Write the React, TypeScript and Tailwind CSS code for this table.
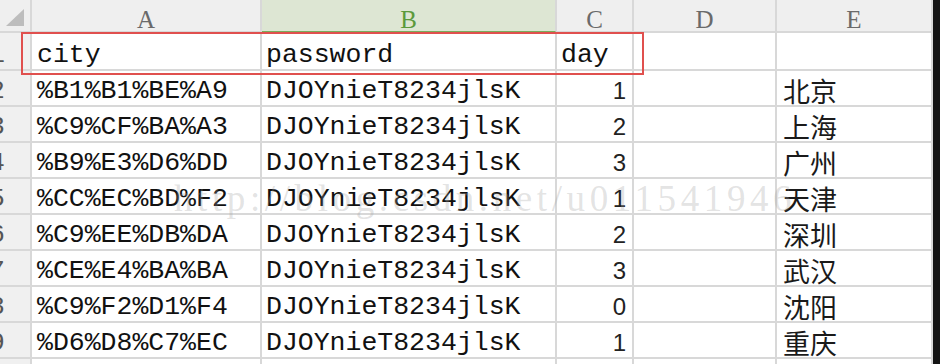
import React from "react";

type Row = { n: number; code: string; day: number; city: string };

const rows: Row[] = [
  { n: 2, code: "%B1%B1%BE%A9", day: 1, city: "北京" },
  { n: 3, code: "%C9%CF%BA%A3", day: 2, city: "上海" },
  { n: 4, code: "%B9%E3%D6%DD", day: 3, city: "广州" },
  { n: 5, code: "%CC%EC%BD%F2", day: 1, city: "天津" },
  { n: 6, code: "%C9%EE%DB%DA", day: 2, city: "深圳" },
  { n: 7, code: "%CE%E4%BA%BA", day: 3, city: "武汉" },
  { n: 8, code: "%C9%F2%D1%F4", day: 0, city: "沈阳" },
  { n: 9, code: "%D6%D8%C7%EC", day: 1, city: "重庆" },
];

const PASSWORD = "DJOYnieT8234jlsK";

const mono = "font-['Liberation_Mono',monospace] text-[26.5px] leading-none";
const cell = "shrink-0 border-r-2 border-b-2 border-[#d8d8d8] flex items-end overflow-hidden";

const headers = [
  { l: "A", w: "w-[230px]" },
  { l: "B", w: "w-[295px]" },
  { l: "C", w: "w-[77px]" },
  { l: "D", w: "w-[143px]" },
  { l: "E", w: "w-[156px]" },
];

function RowNum({ n, h }: { n?: number; h: string }) {
  return (
    <div className={`${cell} ${h} w-[32px] bg-[#f0f0f0] justify-end pr-[25px] pb-[1px]`}>
      <span className={`${mono} text-[#555]`}>{n}</span>
    </div>
  );
}

export default function App() {
  return (
    <div className="relative w-[940px] h-[364px] overflow-hidden bg-white flex">
      <div className="w-[933px] shrink-0 flex flex-col">
        {/* column headers */}
        <div className="flex h-[33px] shrink-0 bg-[#efefef]">
          <div className="relative w-[32px] shrink-0 border-r-2 border-b-2 border-[#d8d8d8]">
            <svg width="20" height="20" viewBox="0 0 20 20" className="absolute left-[5px] top-[8px]">
              <polygon points="1,18 19,18 19,1" fill="#bdbdbd" />
            </svg>
          </div>
          {headers.map((c) =>
            c.l === "B" ? (
              <div
                key={c.l}
                className={`${c.w} shrink-0 border-r-2 border-b-2 border-r-[#d8d8d8] border-b-[#79ad5c] bg-[#dde6d3] flex items-end justify-center`}
              >
                <span className="font-['Liberation_Serif',serif] text-[25px] leading-none text-[#5c9a3c] translate-y-[1px]">{c.l}</span>
              </div>
            ) : (
              <div
                key={c.l}
                className={`${c.w} shrink-0 border-r-2 border-b-2 border-[#d8d8d8] flex items-end justify-center`}
              >
                <span className="font-['Liberation_Serif',serif] text-[25px] leading-none text-[#6a6a6a] translate-y-[1px]">{c.l}</span>
              </div>
            )
          )}
        </div>

        {/* row 1: field names */}
        <div className="flex h-[38px] shrink-0">
          <RowNum n={1} h="h-[38px]" />
          <div className={`${cell} h-[38px] w-[230px] pl-[5px] pb-[1px]`}>
            <span className={`${mono} text-[#111]`}>city</span>
          </div>
          <div className={`${cell} h-[38px] w-[295px] pl-[4px] pb-[1px]`}>
            <span className={`${mono} text-[#111]`}>password</span>
          </div>
          <div className={`${cell} h-[38px] w-[77px] pl-[4px] pb-[1px]`}>
            <span className={`${mono} text-[#111]`}>day</span>
          </div>
          <div className={`${cell} h-[38px] w-[143px]`} />
          <div className={`${cell} h-[38px] w-[156px]`} />
        </div>

        {rows.map((r) => (
          <div key={r.n} className="flex h-[36px] shrink-0">
            <RowNum n={r.n} h="h-[36px]" />
            <div className={`${cell} h-[36px] w-[230px] pl-[5px] pb-[1px]`}>
              <span className={`${mono} text-[#111]`}>{r.code}</span>
            </div>
            <div className={`${cell} h-[36px] w-[295px] pl-[4px] pb-[1px]`}>
              <span className={`${mono} text-[#111]`}>{PASSWORD}</span>
            </div>
            <div className={`${cell} h-[36px] w-[77px] justify-end pr-[6px] pb-[2px]`}>
              <span className="font-['Liberation_Sans',sans-serif] text-[24px] leading-none text-[#222]">
                {r.day}
              </span>
            </div>
            <div className={`${cell} h-[36px] w-[143px]`} />
            <div className={`${cell} h-[36px] w-[156px] pl-[6px] pb-[1px]`}>
              <span className="font-['Noto_Sans_CJK_SC',sans-serif] text-[27px] leading-none text-[#1a1a1a]">
                {r.city}
              </span>
            </div>
          </div>
        ))}

        {/* row 10, cut off at the bottom */}
        <div className="flex h-[36px] shrink-0">
          <RowNum h="h-[36px]" />
          <div className={`${cell} h-[36px] w-[230px]`} />
          <div className={`${cell} h-[36px] w-[295px]`} />
          <div className={`${cell} h-[36px] w-[77px]`} />
          <div className={`${cell} h-[36px] w-[143px]`} />
          <div className={`${cell} h-[36px] w-[156px]`} />
        </div>
      </div>

      {/* dark edge on the right */}
      <div className="flex-1 bg-[#141414]" />

      {/* red highlight around the header row */}
      <div className="absolute left-[21px] top-[32px] w-[623px] h-[43px] border-2 border-[#e0504e] pointer-events-none" />

      {/* blog watermark */}
      <div className="absolute left-[174px] top-[180px] font-['Liberation_Serif',serif] text-[37px] leading-none tracking-[4.6px] text-[#a0a0a0]/30 pointer-events-none whitespace-nowrap">
        http://blog.csdn.net/u011541946
      </div>
    </div>
  );
}
